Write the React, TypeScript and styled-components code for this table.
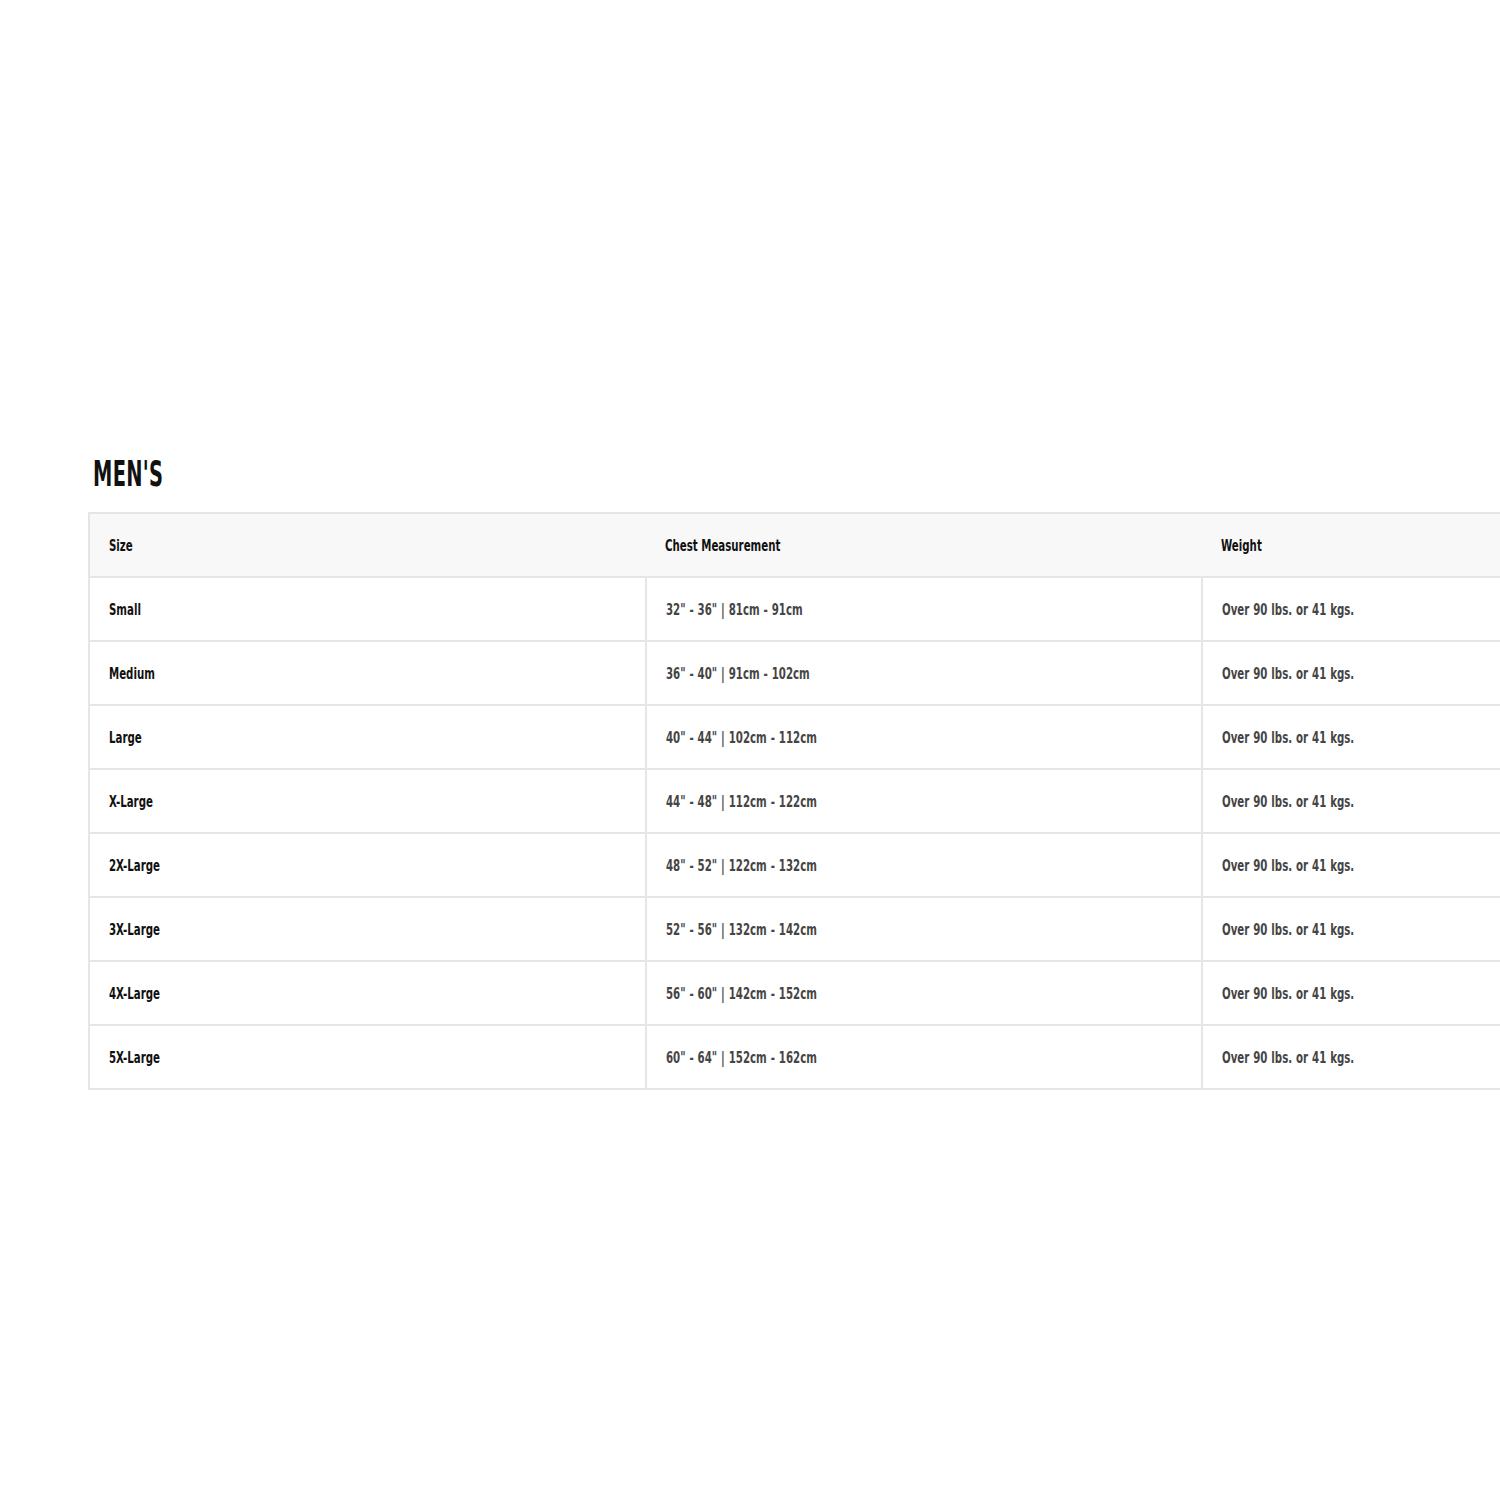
import React from "react";
import styled, { createGlobalStyle } from "styled-components";

const GlobalStyle = createGlobalStyle`
  html, body {
    margin: 0;
    padding: 0;
    background: #fff;
    overflow: hidden;
  }
  body {
    font-family: "DejaVu Sans Condensed", "DejaVu Sans", sans-serif;
    font-stretch: condensed;
  }
`;

const rows = [
  { size: "Small", chest: '32" - 36" | 81cm - 91cm' },
  { size: "Medium", chest: '36" - 40" | 91cm - 102cm' },
  { size: "Large", chest: '40" - 44" | 102cm - 112cm' },
  { size: "X-Large", chest: '44" - 48" | 112cm - 122cm' },
  { size: "2X-Large", chest: '48" - 52" | 122cm - 132cm' },
  { size: "3X-Large", chest: '52" - 56" | 132cm - 142cm' },
  { size: "4X-Large", chest: '56" - 60" | 142cm - 152cm' },
  { size: "5X-Large", chest: '60" - 64" | 152cm - 162cm' },
];

export default function App() {
  return (
    <>
      <GlobalStyle />
      <Page>
        <Title>
          <Narrow $scale={0.6}>MEN'S</Narrow>
        </Title>
        <SizeTable>
          <thead>
            <tr>
              <HeadCell><Narrow>Size</Narrow></HeadCell>
              <HeadCell><Narrow>Chest Measurement</Narrow></HeadCell>
              <HeadCell><Narrow>Weight</Narrow></HeadCell>
            </tr>
          </thead>
          <tbody>
            {rows.map((r) => (
              <tr key={r.size}>
                <Cell $strong><Narrow>{r.size}</Narrow></Cell>
                <Cell><Narrow>{r.chest}</Narrow></Cell>
                <Cell><Narrow>Over 90 lbs. or 41 kgs.</Narrow></Cell>
              </tr>
            ))}
          </tbody>
        </SizeTable>
      </Page>
    </>
  );
}

const Page = styled.div`
  width: 1500px;
  height: 1500px;
  overflow: hidden;
  padding: 454px 0 0 88px;
  box-sizing: border-box;
`;

// condensed display face: squeeze the glyphs horizontally
const Narrow = styled.span<{ $scale?: number }>`
  display: inline-block;
  white-space: nowrap;
  transform: scaleX(${(p) => p.$scale ?? 0.71});
  transform-origin: left center;
`;

const Title = styled.h2`
  margin: 0 0 18px 5px;
  height: 40px;
  font-size: 36px;
  line-height: 40px;
  font-weight: 700;
  color: #111;
  letter-spacing: 0.5px;
`;

const SizeTable = styled.table`
  width: 1672px;
  border-collapse: collapse;
  table-layout: fixed;
  border: 2px solid #e5e5e5;
`;

const HeadCell = styled.th`
  height: 62px;
  padding: 0 0 0 19px;
  text-align: left;
  background: #f8f8f8;
  border-bottom: 2px solid #e5e5e5;
  font-size: 16px;
  font-weight: 700;
  color: #111;
`;

const Cell = styled.td<{ $strong?: boolean }>`
  height: 62px;
  padding: 0 0 0 19px;
  border-bottom: 2px solid #e5e5e5;
  border-left: 2px solid #e5e5e5;
  font-size: 16px;
  font-weight: 700;
  color: ${(p) => (p.$strong ? "#111" : "#454545")};
  word-spacing: 0.5px;
  &:first-child {
    border-left: none;
  }
`;
